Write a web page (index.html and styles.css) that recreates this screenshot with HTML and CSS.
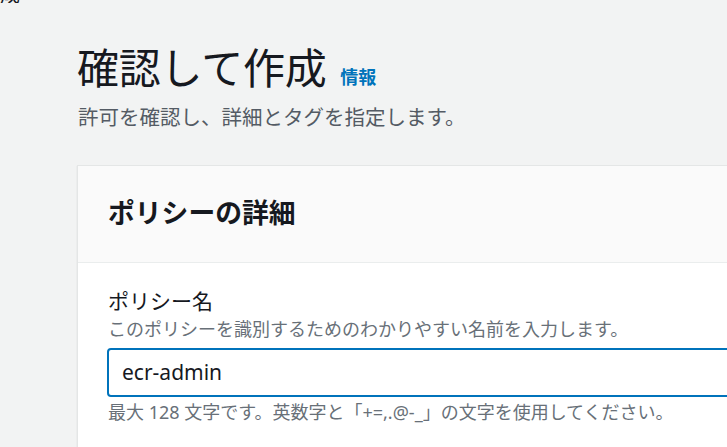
FILE: index.html
```html
<!DOCTYPE html>
<html lang="ja">
<head>
<meta charset="utf-8">
<link rel="stylesheet" href="styles.css">
</head>
<body>
<div class="crumb"><span class="crumb-text">作成</span></div>
<main class="page">
  <header class="page-head">
    <h1 class="title">確認して作成 <a class="info">情報</a></h1>
    <p class="subtitle">許可を確認し、詳細とタグを指定します。</p>
  </header>
  <section class="card">
    <div class="card-head">
      <h2 class="card-title">ポリシーの詳細</h2>
    </div>
    <div class="card-body">
      <label class="label">ポリシー名</label>
      <div class="desc">このポリシーを識別するためのわかりやすい名前を入力します。</div>
      <div class="input">ecr-admin</div>
      <div class="help">最大 128 文字です。英数字と「+=,.@-_」の文字を使用してください。</div>
    </div>
  </section>
</main>
</body>
</html>
```

FILE: styles.css
```css
html, body {
  margin: 0;
  padding: 0;
  background: #f2f3f3;
  overflow: hidden;
  width: 727px;
  height: 447px;
}
body {
  font-family: "Noto Sans", "Noto Sans CJK JP", sans-serif;
  color: #16191f;
}
.crumb {
  height: 3px;
  overflow: hidden;
  margin-left: -20px;
}
.crumb-text {
  display: block;
  margin-top: -15px;
  font-size: 20px;
  line-height: 20px;
  color: #16191f;
}
.page {
  padding-left: 77px;
  width: 900px;
}
.page-head {
  padding-top: 40px;
}
.title {
  margin: 0;
  font-size: 42px;
  font-weight: 400;
  line-height: 50px;
  letter-spacing: -0.2px;
}
.info {
  font-size: 18px;
  font-weight: 700;
  color: #0073bb;
  letter-spacing: 0;
  margin-left: 3px;
}
.subtitle {
  margin: 1px 0 0 1px;
  font-size: 20.5px;
  line-height: 28px;
  color: #545b64;
}
.card {
  margin-top: 34px;
  background: #fff;
  border: 1px solid #e4e6e6;
  border-right: none;
  box-shadow: 0 1px 1px rgba(0,28,36,0.15);
}
.card-head {
  background: #fafafa;
  border-bottom: 1px solid #eaeded;
  height: 96px;
  display: flex;
  align-items: center;
  padding-left: 30px;
}
.card-title {
  margin: 0;
  font-size: 26.8px;
  font-weight: 700;
  line-height: 32px;
  padding-bottom: 3px;
}
.card-body {
  padding: 23px 30px 60px 30px;
}
.label {
  display: block;
  font-size: 21px;
  line-height: 30px;
  color: #16191f;
}
.desc {
  font-size: 18px;
  line-height: 26px;
  color: #687078;
}
.input {
  margin-top: 6px;
  margin-left: -1px;
  height: 45px;
  border: 2px solid #0073bb;
  border-radius: 4px;
  font-size: 21px;
  line-height: 45px;
  padding-left: 13px;
  color: #16191f;
}
.help {
  margin-top: 2px;
  font-size: 18px;
  line-height: 26px;
  color: #687078;
}
```
